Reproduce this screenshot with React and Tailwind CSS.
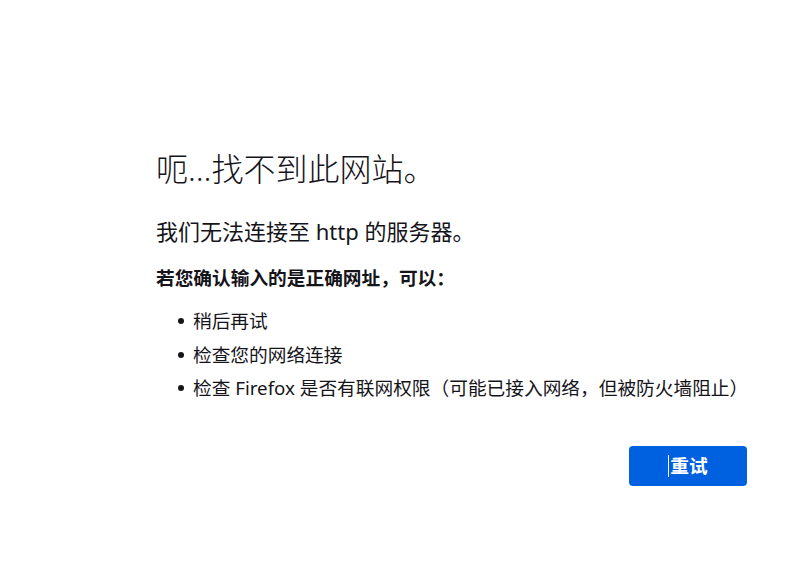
export default function App() {
  const tips = [
    '稍后再试',
    '检查您的网络连接',
    '检查 Firefox 是否有联网权限（可能已接入网络，但被防火墙阻止）',
  ]

  return (
    <div
      className="min-h-[565px] bg-white text-[#15141a] pt-[151px] pl-[156px]"
      style={{ fontFamily: '"Noto Sans", "Noto Sans CJK SC", sans-serif' }}
    >
      <div className="w-[591px]">
        <h1 className="text-[32px] leading-[36px] font-light">呃…找不到此网站。</h1>
        <p className="mt-[29px] text-[22px] leading-[30px]">我们无法连接至 http 的服务器。</p>
        <p className="mt-[18px] text-[18.7px] leading-[28px] font-bold">若您确认输入的是正确网址，可以：</p>
        <ul className="mt-[15px] flex flex-col gap-[5.5px]">
          {tips.map(t => (
            <li key={t} className="flex items-center text-[18.7px] leading-[28px] whitespace-nowrap">
              <span className="w-[6px] h-[6px] rounded-full bg-[#15141a] ml-[22px] mr-[9px] shrink-0" />
              {t}
            </li>
          ))}
        </ul>
        <div className="mt-[44px] flex justify-end">
          <button className="relative w-[118px] h-[40px] rounded-[4px] bg-[#0061e0] text-white text-[18.7px] font-bold flex items-center justify-center">
            <span className="w-[1px] h-[22px] bg-white mr-[1px]" />
            重试
          </button>
        </div>
      </div>
    </div>
  )
}
